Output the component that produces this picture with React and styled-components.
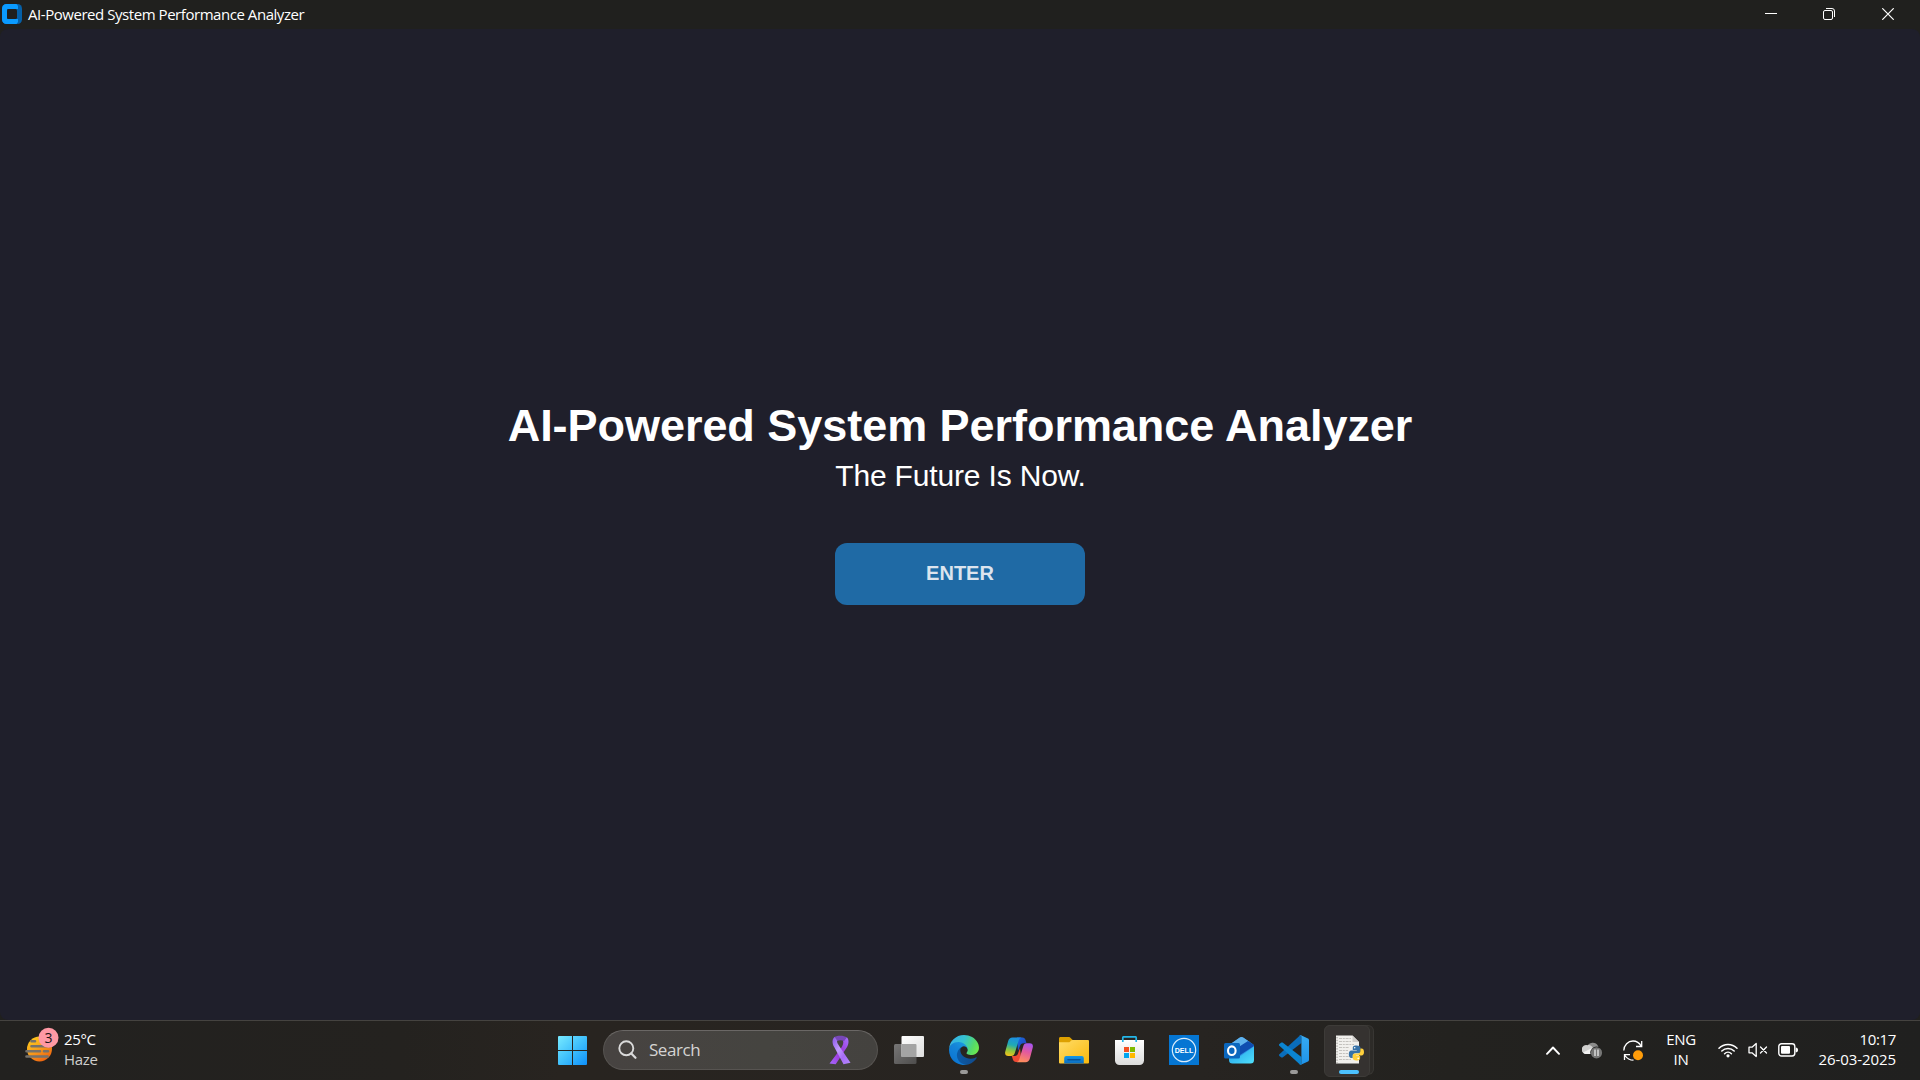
import React from "react";
import styled, { createGlobalStyle } from "styled-components";

const GlobalStyle = createGlobalStyle`
  * { box-sizing: border-box; }
  html, body { margin: 0; padding: 0; background: #20201e; }
`;

const uiFont = `"Open Sans", "Noto Sans", sans-serif`;
const appFont = `"Liberation Sans", Arial, sans-serif`;

const Desktop = styled.div`
  width: 1920px;
  height: 1080px;
  display: flex;
  flex-direction: column;
  overflow: hidden;
  background: #20201e;
  font-family: ${uiFont};
  color: #fff;
`;

const TitleBar = styled.header`
  height: 29px;
  flex: none;
  display: flex;
  align-items: flex-start;
  padding-left: 2px;

  > svg { margin-top: 4px; }
`;

const WindowTitle = styled.span`
  flex: 1;
  margin-left: 6px;
  font-size: 15px;
  line-height: 29px;
  letter-spacing: -0.45px;
  white-space: nowrap;
`;

const WindowButton = styled.button`
  width: ${(p) => p.$width}px;
  height: 28px;
  padding: 0;
  border: 0;
  background: none;
  display: flex;
  align-items: center;
  justify-content: center;
`;

const WindowControls = styled.div`
  display: flex;
  padding-right: 2px;
`;

const Client = styled.main`
  height: 991px;
  flex: none;
  border-radius: 8px;
  background: #1f1f2b;
  display: flex;
  flex-direction: column;
  align-items: center;
  padding-top: 369px;
  font-family: ${appFont};
`;

const Heading = styled.h1`
  margin: 0;
  height: 56px;
  line-height: 56px;
  font-size: 45px;
  font-weight: 700;
  letter-spacing: -0.04px;
  white-space: nowrap;
`;

const Tagline = styled.p`
  margin: 0;
  height: 44px;
  line-height: 44px;
  font-size: 30px;
  letter-spacing: -0.16px;
  padding-left: 1px;
  white-space: nowrap;
`;

const EnterButton = styled.button`
  width: 250px;
  height: 62px;
  margin-top: 45px;
  padding: 0 0 2px;
  border: 0;
  border-radius: 12px;
  background: #1f6aa5;
  color: #dce4ee;
  font: 700 20px/24px ${appFont};
`;

const Taskbar = styled.footer`
  height: 60px;
  flex: none;
  display: grid;
  grid-template-columns: 545px 860px 1fr;
  padding-bottom: 1px;
  border-top: 1px solid #454340;
  background: linear-gradient(90deg, #22211f 0, #24221f 400px, #282420 560px, #272421 1200px, #23221f 1450px, #20201f 1920px);
`;

const Weather = styled.section`
  display: flex;
  align-items: center;
  padding-left: 24px;

  > svg { margin-bottom: 10px; }
`;

const Stack = styled.div`
  display: flex;
  flex-direction: column;
  align-items: ${(p) => p.$align};
  width: ${(p) => p.$width}px;
  margin-left: ${(p) => p.$gap || 0}px;
  padding-bottom: 2px;
`;

const Line = styled.span`
  height: 20px;
  line-height: 20px;
  font-size: 15px;
  letter-spacing: ${(p) => p.$spacing || "-0.35px"};
  color: ${(p) => (p.$muted ? "#cfcecd" : "#fff")};
  white-space: nowrap;
`;

const Apps = styled.nav`
  display: flex;
  align-items: center;
`;

const AppSlot = styled.div`
  position: relative;
  width: 55px;
  height: 58px;
  flex: none;
  display: flex;
  align-items: center;
  justify-content: center;

  > svg { margin-top: ${(p) => p.$drop || 0}px; }
`;

const ActiveTile = styled.div`
  position: relative;
  width: 50px;
  height: 50px;
  display: flex;
  align-items: center;
  justify-content: center;
  padding: 0 0 1px 3px;
  border-radius: 6px;
  background: #2d2b28;
  border: 1px solid #383633;
  border-left: 0;

  &::before {
    content: "";
    position: absolute;
    left: 0;
    top: -1px;
    width: 44px;
    height: 50px;
    border: 1px solid #3d3b38;
    border-radius: 6px;
    background: #353230;
  }

  svg { position: relative; }
`;

const Indicator = styled.span`
  position: absolute;
  left: 50%;
  bottom: 5px;
  width: ${(p) => (p.$active ? 20 : 8)}px;
  height: 4px;
  margin-left: ${(p) => (p.$active ? -10 : -4)}px;
  border-radius: 2px;
  background: ${(p) => (p.$active ? "#4cc2ff" : "#9b9a99")};
`;

const SearchBox = styled.div`
  width: 275px;
  height: 40px;
  flex: none;
  margin: 0 3.5px 0 3px;
  padding: 0 26px 0 14px;
  display: flex;
  align-items: center;
  border: 1px solid #575451;
  border-top-color: #6a6765;
  border-radius: 20px;
  background: linear-gradient(90deg, #474341, #454440 60%, #44423f);
`;

const SearchLabel = styled.span`
  flex: 1;
  margin-left: 11px;
  font-size: 17px;
  line-height: 38px;
  letter-spacing: -0.45px;
  color: #d5d4d3;
`;

const Tray = styled.section`
  display: flex;
  align-items: center;
  padding-left: 133px;
`;

const TrayItem = styled.div`
  width: ${(p) => p.$width}px;
  height: 40px;
  display: flex;
  align-items: center;
  justify-content: center;
`;

const AppLogo = () => (
  <svg width="20" height="20" viewBox="0 0 20 20">
    <rect width="20" height="20" rx="4.500" fill="#0560a8" />
    <path d="M4.500 0H14.500L16 2v3H5v10h11v3l-1.500 2H4.500A4.500 4.500 0 0 1 0 15.500V4.500A4.500 4.500 0 0 1 4.500 0Z" fill="#0a9bff" />
    <rect x="5" y="5" width="10" height="10" rx="1.500" fill="#20201e" />
  </svg>
);

const WeatherIcon = () => (
  <svg width="36" height="36" viewBox="0 0 36 36">
    <defs>
      <linearGradient id="sun" x1="0" y1="0" x2=".6" y2="1">
        <stop offset="0" stopColor="#ffd21a" />
        <stop offset=".5" stopColor="#f9a51d" />
        <stop offset="1" stopColor="#ef6610" />
      </linearGradient>
    </defs>
    <circle cx="15.500" cy="22" r="12.500" fill="url(#sun)" />
    <g stroke="#77726b" strokeWidth="2.600" strokeLinecap="round">
      <path d="M7.500 14.300h3.500M7.500 19.300h18M2.500 24.300h13.500M20 24.300h4M2.500 29.500h21" />
    </g>
    <circle cx="24.500" cy="10.800" r="10" fill="#ff99a4" />
    <text x="24.500" y="16" textAnchor="middle" fontFamily="Open Sans" fontSize="14" fill="#1c1416">3</text>
  </svg>
);

const StartIcon = () => (
  <svg width="29" height="29" viewBox="0 0 29 29">
    <defs>
      <linearGradient id="win" gradientUnits="userSpaceOnUse" x1="0" y1="0" x2="29" y2="29">
        <stop offset="0" stopColor="#78eaff" />
        <stop offset=".5" stopColor="#40c0fc" />
        <stop offset="1" stopColor="#0e90fb" />
      </linearGradient>
    </defs>
    <path d="M1 0h13v14H0V1a1 1 0 0 1 1-1ZM15 0h13a1 1 0 0 1 1 1v13H15ZM0 15h14v14H1a1 1 0 0 1-1-1ZM15 15h14v13a1 1 0 0 1-1 1H15Z" fill="url(#win)" />
  </svg>
);

const SearchIcon = () => (
  <svg width="20" height="20" viewBox="0 0 20 20" fill="none" stroke="#dadada" strokeLinecap="round">
    <circle cx="8.300" cy="8.300" r="7" strokeWidth="1.900" />
    <path d="m13.300 13.400 4.200 4.400" strokeWidth="2.200" />
  </svg>
);

const RibbonIcon = () => (
  <svg width="22" height="30" viewBox="0 0 22 30">
    <defs>
      <linearGradient id="ribA" x1="0" y1="0" x2="1" y2="1">
        <stop offset="0" stopColor="#8b56e8" />
        <stop offset=".4" stopColor="#c19aff" />
        <stop offset=".65" stopColor="#a76cf5" />
        <stop offset="1" stopColor="#b488ff" />
      </linearGradient>
      <linearGradient id="ribB" x1="1" y1="0" x2="0" y2="1">
        <stop offset="0" stopColor="#a673ff" />
        <stop offset=".5" stopColor="#9c2fd6" />
        <stop offset="1" stopColor="#a56cff" />
      </linearGradient>
    </defs>
    <path d="M14 5.500c1 3-.5 5.500-2.700 8.800L.5 28.500l6.200.8 10.500-16c2.600-3.500 3.300-8.300.6-11Z" fill="url(#ribB)" />
    <path d="M5.800 1.800C8.500.2 15 .2 17.800 2.300L15 6.200c-1.800-1.300-5.200-1.300-7 0Z" fill="#7747b8" />
    <path d="M5.800 1.800C2.800 4 3 8.600 5.200 12L14.500 29.300l7-1.500L10.500 11.500C9 9.200 7.800 7.500 8 5.500Z" fill="url(#ribA)" />
  </svg>
);

const TaskViewIcon = () => (
  <svg width="30" height="28" viewBox="0 0 30 28">
    <defs>
      <linearGradient id="tvw" x1="0" y1="0" x2="1" y2="1">
        <stop offset="0" stopColor="#fff" />
        <stop offset="1" stopColor="#dedede" />
      </linearGradient>
      <linearGradient id="tvg" x1="0" y1="0" x2="1" y2="1">
        <stop offset="0" stopColor="#777676" />
        <stop offset="1" stopColor="#4e4d4c" />
      </linearGradient>
    </defs>
    <rect y="8" width="22.500" height="20" rx="1.500" fill="url(#tvg)" />
    <rect x="7.500" width="22.500" height="21" rx="1" fill="url(#tvw)" />
    <path d="M7.500 8H21.500a1 1 0 0 1 1 1v12h-15Z" fill="#a4a4a4" />
  </svg>
);

const EdgeIcon = () => (
  <svg width="30" height="30" viewBox="0 0 256 256">
    <defs>
      <linearGradient id="edgeA" x1=".2" y1=".5" x2="1" y2=".6">
        <stop offset="0" stopColor="#0c59a4" />
        <stop offset="1" stopColor="#114a8b" />
      </linearGradient>
      <linearGradient id="edgeB" x1=".8" y1="0" x2=".2" y2="1">
        <stop offset="0" stopColor="#1b9de2" />
        <stop offset=".4" stopColor="#1484d8" />
        <stop offset="1" stopColor="#0a73d2" />
      </linearGradient>
      <linearGradient id="edgeC" x1="0" y1=".3" x2="1" y2=".6">
        <stop offset="0" stopColor="#35b0ea" />
        <stop offset=".45" stopColor="#36c3cf" />
        <stop offset=".8" stopColor="#55d96a" />
        <stop offset="1" stopColor="#6ce84f" />
      </linearGradient>
    </defs>
    <path fill="url(#edgeA)" d="M231 190.500c-3.400 1.800-6.900 3.400-10.500 4.700a101.500 101.500 0 0 1-35.900 6.400c-47.300 0-88.500-32.500-88.500-74.300a31.500 31.500 0 0 1 16.400-27.300c-42.800 1.800-53.800 46.400-53.800 72.500 0 74 68.100 81.400 82.800 81.400 7.900 0 19.800-2.300 27-4.600l1.300-.4a128.300 128.300 0 0 0 66.600-52.800 4 4 0 0 0-5.400-5.600Z" />
    <path fill="url(#edgeB)" d="M105.700 241.400a79.200 79.200 0 0 1-22.700-21.300 80.700 80.700 0 0 1 29.500-120c3.200-1.500 8.500-4.100 15.600-4a32.400 32.400 0 0 1 25.700 13 31.900 31.900 0 0 1 6.300 18.700c0-.2 24.500-79.600-80-79.600-43.900 0-80 41.600-80 78.200a130.200 130.200 0 0 0 12.100 56 128 128 0 0 0 156.400 67 75.500 75.500 0 0 1-62.800-8Z" />
    <path fill="url(#edgeC)" d="M152.300 148.900c-.9 1-3.400 2.500-3.400 5.600 0 2.600 1.700 5.200 4.800 7.300 14.300 10 41.400 8.600 41.500 8.600a59.600 59.600 0 0 0 30.300-8.300 61.400 61.400 0 0 0 30.400-52.900c.3-22.400-8-37.300-11.300-43.900C223.500 23.900 177.700 0 128 0A128 128 0 0 0 0 126.200c.5-36.500 36.800-66 80-66 3.500 0 23.500.3 42 10a72.600 72.600 0 0 1 30.900 29.300c6.100 10.600 7.200 24.100 7.200 29.500s-2.700 13.300-7.800 19.900Z" />
  </svg>
);

const CopilotIcon = () => (
  <svg width="28" height="26" viewBox="0 0 28 26">
    <defs>
      <linearGradient id="copA" x1=".5" y1="0" x2=".3" y2="1">
        <stop offset="0" stopColor="#1d8fe0" />
        <stop offset=".4" stopColor="#20aab5" />
        <stop offset=".7" stopColor="#8cc63f" />
        <stop offset="1" stopColor="#f2c21a" />
      </linearGradient>
      <linearGradient id="copB" x1=".7" y1="0" x2=".4" y2="1">
        <stop offset="0" stopColor="#a855f0" />
        <stop offset=".45" stopColor="#e2599f" />
        <stop offset="1" stopColor="#ff8d5c" />
      </linearGradient>
      <linearGradient id="copC" x1="0" y1="0" x2="1" y2="1">
        <stop offset="0" stopColor="#1a6fe0" />
        <stop offset="1" stopColor="#2437b8" />
      </linearGradient>
    </defs>
    <path d="M12 .5h5.500c1.700 0 2.500 1 3 2.500l1 3.200h-3c-2 0-3 1-3.600 3L13 14Z" fill="url(#copC)" />
    <path d="M16.500 25H11c-1.700 0-2.600-.9-3.100-2.500L6.800 19h3c2 0 2.800-1 3.400-3L15 11Z" fill="#ef4a35" />
    <path d="M7.500.5h9c-1.500.3-2.300 1.500-2.800 3L9.800 16c-.6 2-1.600 3-3.600 3H3.400C.6 19-.4 17 .3 14.500L3.200 4C3.900 1.700 5.200.5 7.500.5Z" fill="url(#copA)" />
    <path d="M20.500 25.200h-9c1.500-.3 2.300-1.500 2.800-3l3.900-12.800c.6-2 1.600-3.200 3.600-3.200h2.800c2.800 0 3.800 2 3.100 4.500l-2.900 11c-.7 2.300-2 3.500-4.300 3.500Z" fill="url(#copB)" />
  </svg>
);

const FolderIcon = () => (
  <svg width="30" height="27" viewBox="0 0 30 27">
    <defs>
      <linearGradient id="fold" x1="0" y1="0" x2="1" y2="1">
        <stop offset="0" stopColor="#ffdc68" />
        <stop offset="1" stopColor="#fab90c" />
      </linearGradient>
      <linearGradient id="foldBlue" x1="0" y1="0" x2="0" y2="1">
        <stop offset="0" stopColor="#1497e6" />
        <stop offset="1" stopColor="#0b6cc0" />
      </linearGradient>
    </defs>
    <path d="M1.500 0h8c1 0 1.500.4 2.100 1L14 3.200V6H0V1.500C0 .6.600 0 1.500 0Z" fill="#dda000" />
    <path d="M0 5.300h9c1 0 1.700-.3 2.300-.9l.8-.8c.4-.4.900-.6 1.600-.6H29a1 1 0 0 1 1 1v21.500a1 1 0 0 1-1 1H1a1 1 0 0 1-1-1Z" fill="url(#fold)" />
    <path d="M7.200 19h15.600a2 2 0 0 1 2 2v5.500H5.200V21a2 2 0 0 1 2-2Z" fill="url(#foldBlue)" />
    <rect x="8.200" y="22" width="13.500" height="1.400" rx=".7" fill="#07539a" />
  </svg>
);

const StoreIcon = () => (
  <svg width="29" height="29" viewBox="0 0 29 29">
    <defs>
      <linearGradient id="bag" x1="0" y1="0" x2="0" y2="1">
        <stop offset="0" stopColor="#fff" />
        <stop offset="1" stopColor="#dcdcdc" />
      </linearGradient>
    </defs>
    <path d="M0 4h29v20.500a4.500 4.500 0 0 1-4.500 4.500h-20A4.500 4.500 0 0 1 0 24.500Z" fill="url(#bag)" />
    <path d="M7.800 6V1.800a1 1 0 0 1 1-1h11.400a1 1 0 0 1 1 1V6" fill="none" stroke="#24b6e8" strokeWidth="1.700" />
    <path d="M9 11h5v5H9Z" fill="#f25022" />
    <path d="M15 11h5v5h-5Z" fill="#7fba00" />
    <path d="M9 17h5v5H9Z" fill="#00a4ef" />
    <path d="M15 17h5v5h-5Z" fill="#ffb900" />
  </svg>
);

const DellIcon = () => (
  <svg width="30" height="30" viewBox="0 0 30 30">
    <rect width="30" height="30" fill="#0576d3" />
    <circle cx="15" cy="15" r="11.700" fill="none" stroke="#dcecfa" strokeWidth="1.200" />
    <text x="15" y="17.800" textAnchor="middle" fontFamily="Liberation Sans" fontWeight="700" fontSize="7.600" textLength="18.500" lengthAdjust="spacingAndGlyphs" fill="#fff">DELL</text>
  </svg>
);

const OutlookIcon = () => (
  <svg width="30" height="27" viewBox="0 0 30 27">
    <defs>
      <linearGradient id="olk" x1="0" y1="0" x2="1" y2="1">
        <stop offset="0" stopColor="#1e9be8" />
        <stop offset="1" stopColor="#50e0fb" />
      </linearGradient>
    </defs>
    <path d="M5 8 15.500.8a3.500 3.500 0 0 1 4 0L29 7.200a2 2 0 0 1 1 1.800v4L13 24 5 16Z" fill="#2d8fe0" />
    <path d="m8 6 7.500-5.200a3.500 3.500 0 0 1 4 0L26 5.200 14 13Z" fill="#5fb2ed" />
    <path d="M24 3.900 29 7.200a2 2 0 0 1 1 1.800l-14 9-6-5Z" fill="#0f4db0" />
    <path d="M30 9.500V23a3.500 3.500 0 0 1-3.500 3.500h-18A3.500 3.500 0 0 1 5 23v-3h10Z" fill="url(#olk)" />
    <rect y="6" width="16" height="15.500" rx="1.500" fill="#0b67be" />
    <ellipse cx="7.800" cy="13.700" rx="3.800" ry="4.300" fill="none" stroke="#fff" strokeWidth="2.100" />
  </svg>
);

const CodeIcon = () => (
  <svg width="30" height="30" viewBox="0 0 30 30">
    <defs>
      <linearGradient id="vsc" x1="0" y1="0" x2="0" y2="1">
        <stop offset="0" stopColor="#36aaf2" />
        <stop offset="1" stopColor="#1f94ea" />
      </linearGradient>
    </defs>
    <path d="M.4 19.200a1.200 1.200 0 0 0 0 1.700L2 22.300c.5.4 1.100.4 1.600.1L22.400 8V.8c0-.6-.8-.9-1.500-.3Z" fill="#0a6dbb" />
    <path d="M.4 10.800a1.200 1.200 0 0 1 0-1.700L2 7.700c.5-.4 1.100-.4 1.600-.1L22.400 22v7.200c0 .6-.8.9-1.500.3Z" fill="#0b84d0" />
    <path d="M21.800 29.800a1.900 1.900 0 0 1-1.700-.5c.9.700 2.300.1 2.300-1.100V1.800c0-1.200-1.400-1.800-2.300-1.100.5-.5 1.200-.6 1.800-.4L29 3.500c.6.300 1 1 1 1.700v19.600c0 .7-.4 1.400-1 1.700Z" fill="url(#vsc)" />
  </svg>
);

const PythonFileIcon = () => (
  <svg width="28" height="29" viewBox="0 0 28 29">
    <path d="M0 .5h16.500L23 7v21.500H0Z" fill="#f1f0ed" />
    <path d="M16.500.5V7H23Z" fill="#cfcdca" />
    <path d="M3 3.500h12M3 6.500h12M3 9.500h15M3 12.500h10M3 15.500h9M3 18.500h9M3 21.500h12M3 24.500h12" stroke="#c4c2be" strokeWidth="1" strokeDasharray="3 .8 2 .8" />
    <path d="M1 2v26" stroke="#8c8a87" strokeWidth=".9" strokeDasharray="1.400 1.400" />
    <path d="M20.500 10.500c-3.800 0-3.700 1.700-3.700 2.600v1.800h4v.7h-5.600c-1.400 0-2.400 1.300-2.400 3.700 0 2.300 1 3.700 2.400 3.700h1.600v-2.200c0-1.700 1.200-2.600 2.600-2.600h3.200c1.200 0 1.900-.9 1.900-2v-3.100c0-1.800-1.500-2.600-4-2.600Z" fill="#3672a8" />
    <path d="M20.200 25.500c3.800 0 3.900-1.500 3.900-2.600v-1.800h-3.900v-.7h5.400c1.500 0 2.400-1.200 2.400-3.500 0-2.200-1-3.400-2.400-3.400h-1.200v2.200c0 1.700-1 2.700-2.600 2.700h-3c-1.300 0-2.100.8-2.100 2V23c0 1.600 1.200 2.500 3.500 2.500Z" fill="#ffd03c" />
    <circle cx="18.700" cy="12.700" r=".8" fill="#fff" />
    <circle cx="22.200" cy="23.400" r=".8" fill="#fff" />
  </svg>
);

const ChevronIcon = () => (
  <svg width="14" height="9" viewBox="0 0 14 9" fill="none" stroke="#fff" strokeWidth="1.900" strokeLinecap="round" strokeLinejoin="round">
    <path d="m1 7.800 6-6.300 6 6.300" />
  </svg>
);

const CloudIcon = () => (
  <svg width="21" height="18" viewBox="0 0 21 18">
    <path d="M5 6A6 6 0 0 1 16 5c1.500 2 1 5 0 6L9 8Z" fill="#8c8c8b" />
    <path d="M4.500 13A4.500 4.500 0 1 1 5.500 4.200C8 3.400 10 5 11 7l4 5-2 1Z" fill="#cfcfce" />
    <path d="M1 11.500 10 7l4 6H4.500C3 13 1.700 12.500 1 11.500Z" fill="#f1f1f0" />
    <circle cx="14.500" cy="11.800" r="6.200" fill="#20201f" />
    <circle cx="14.500" cy="11.800" r="5.600" fill="#767675" />
    <path d="M13 8.600v6.400M16 8.600v6.400" stroke="#fff" strokeWidth="1.100" />
  </svg>
);

const SyncIcon = () => (
  <svg width="20" height="21" viewBox="0 0 20 21">
    <g fill="none" stroke="#fff" strokeWidth="1.300">
      <path d="M.8 10.500C1 5 5 1 10 1c3.700 0 6.500 2 8.200 5.200M18.700 1v5.500H13" />
      <path d="M10.500 20.200C7 20.200 4 18.500 2 15.500M1.500 20v-5.300H7" />
    </g>
    <circle cx="15" cy="15.200" r="5" fill="#ff9d0a" />
  </svg>
);

const WifiIcon = () => (
  <svg width="20" height="16" viewBox="0 0 20 16" fill="none" stroke="#fff" strokeWidth="1.500" strokeLinecap="round">
    <path d="M1 6.200a12.700 12.700 0 0 1 18 0M3.800 9a8.800 8.800 0 0 1 12.400 0M6.600 11.700a4.900 4.900 0 0 1 6.800 0" />
    <circle cx="10" cy="13.800" r="1.600" fill="#fff" stroke="none" />
  </svg>
);

const MuteIcon = () => (
  <svg width="20" height="16" viewBox="0 0 20 16" fill="none" stroke="#fff" strokeWidth="1.300" strokeLinecap="round" strokeLinejoin="round">
    <path d="M1 5.200h3L8.200 1.500v13L4 10.800H1Z" />
    <path d="m12.500 5 6 6M18.500 5l-6 6" />
  </svg>
);

const BatteryIcon = () => (
  <svg width="20" height="14" viewBox="0 0 20 14">
    <rect x=".8" y=".8" width="16" height="12.200" rx="2.700" fill="none" stroke="#fff" strokeWidth="1.400" />
    <rect x="3" y="3" width="9" height="7.800" rx="1" fill="#fff" />
    <path d="M17.700 4.500c1.500.2 2.300 1 2.300 2.400s-.8 2.200-2.300 2.400Z" fill="#fff" />
  </svg>
);

const MinimizeIcon = () => (
  <svg width="12" height="12" viewBox="0 0 12 12" shapeRendering="crispEdges">
    <path d="M0 5h12v1H0Z" fill="#fff" />
  </svg>
);

const RestoreIcon = () => (
  <svg width="12" height="12" viewBox="0 0 12 12" fill="none" stroke="#fff">
    <rect x=".5" y="2.500" width="9" height="9" rx="1.500" />
    <path d="M3 .5h6A2.500 2.500 0 0 1 11.500 3v6" />
  </svg>
);

const CloseIcon = () => (
  <svg width="12" height="12" viewBox="0 0 12 12" stroke="#fff" strokeWidth="1.200">
    <path d="m.3.3 11.400 11.400M11.700.3.300 11.700" />
  </svg>
);

const pinnedApps = [
  { name: "Task View", Icon: TaskViewIcon },
  { name: "Edge", Icon: EdgeIcon, running: true },
  { name: "Copilot", Icon: CopilotIcon },
  { name: "File Explorer", Icon: FolderIcon, drop: 1 },
  { name: "Microsoft Store", Icon: StoreIcon, drop: 1 },
  { name: "Dell", Icon: DellIcon },
  { name: "Outlook", Icon: OutlookIcon, drop: 1 },
  { name: "Visual Studio Code", Icon: CodeIcon, running: true },
];

export default function App() {
  return (
    <>
      <GlobalStyle />
      <Desktop>
        <TitleBar>
          <AppLogo />
          <WindowTitle>AI-Powered System Performance Analyzer</WindowTitle>
          <WindowControls>
            <WindowButton $width={58}><MinimizeIcon /></WindowButton>
            <WindowButton $width={58}><RestoreIcon /></WindowButton>
            <WindowButton $width={60}><CloseIcon /></WindowButton>
          </WindowControls>
        </TitleBar>

        <Client>
          <Heading>AI-Powered System Performance Analyzer</Heading>
          <Tagline>The Future Is Now.</Tagline>
          <EnterButton>ENTER</EnterButton>
        </Client>

        <Taskbar>
          <Weather>
            <WeatherIcon />
            <Stack $align="flex-start" $width={60} $gap={4}>
              <Line>25°C</Line>
              <Line $muted>Haze</Line>
            </Stack>
          </Weather>

          <Apps>
            <AppSlot $drop={1}><StartIcon /></AppSlot>
            <SearchBox>
              <SearchIcon />
              <SearchLabel>Search</SearchLabel>
              <RibbonIcon />
            </SearchBox>
            {pinnedApps.map(({ name, Icon, running, drop }) => (
              <AppSlot key={name} $drop={drop}>
                <Icon />
                {running && <Indicator />}
              </AppSlot>
            ))}
            <AppSlot>
              <ActiveTile><PythonFileIcon /></ActiveTile>
              <Indicator $active />
            </AppSlot>
          </Apps>

          <Tray>
            <TrayItem $width={30}><ChevronIcon /></TrayItem>
            <TrayItem $width={49}><CloudIcon /></TrayItem>
            <TrayItem $width={32}><SyncIcon /></TrayItem>
            <Stack $align="center" $width={64}>
              <Line>ENG</Line>
              <Line>IN</Line>
            </Stack>
            <TrayItem $width={30}><WifiIcon /></TrayItem>
            <TrayItem $width={30}><MuteIcon /></TrayItem>
            <TrayItem $width={30}><BatteryIcon /></TrayItem>
            <Stack $align="flex-end" $width={93}>
              <Line>10:17</Line>
              <Line $spacing="-0.08px">26-03-2025</Line>
            </Stack>
          </Tray>
        </Taskbar>
      </Desktop>
    </>
  );
}
